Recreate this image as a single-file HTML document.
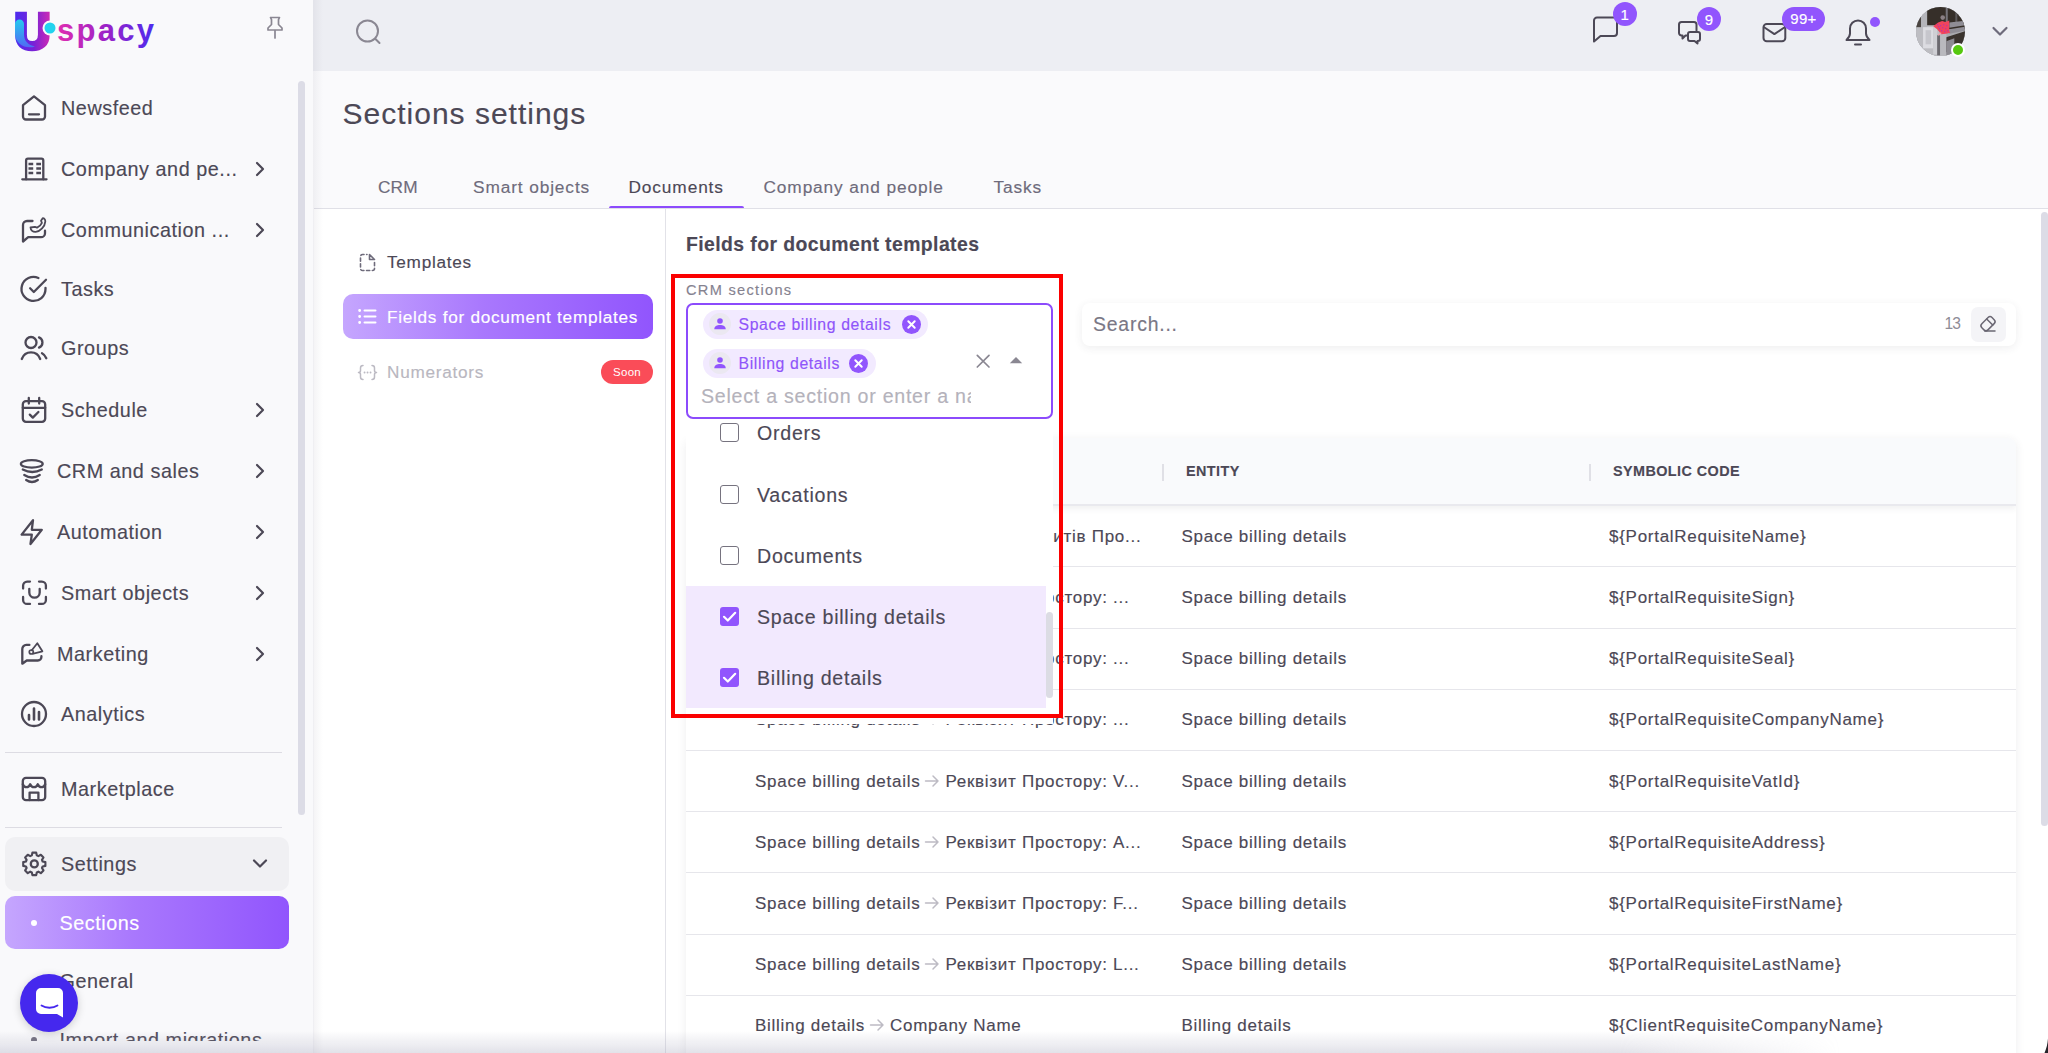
<!DOCTYPE html>
<html lang="en">
<head>
<meta charset="utf-8">
<title>Sections settings</title>
<style>
*{box-sizing:border-box;margin:0;padding:0}
html,body{width:2048px;height:1053px;overflow:hidden}
body{font-family:"Liberation Sans",sans-serif;-webkit-text-stroke:.15px;color:#4c4856;background:#fafafc;position:relative}
.abs{position:absolute}
svg{display:block;overflow:visible}
/* sidebar */
#sidebar{position:absolute;left:0;top:0;width:313px;height:1053px;background:#f9f9fb;z-index:5;overflow:hidden}
#sideshadow{position:absolute;left:313px;top:0;width:10px;height:1053px;background:linear-gradient(90deg,rgba(90,85,110,.07),rgba(90,85,110,0));z-index:6}
.nav{position:absolute;left:0;width:296px;height:40px}
.nav .ic{position:absolute;left:20px;top:6px;width:28px;height:28px}
.nav .tx{position:absolute;left:61px;top:0;line-height:40px;font-size:19.8px;letter-spacing:.55px;white-space:nowrap;color:#4c4856}
.nav .ch{position:absolute;left:253px;top:13px;width:14px;height:14px}
.ic svg{width:28px;height:28px;fill:none;stroke:#4c4856;stroke-width:2.3;stroke-linecap:round;stroke-linejoin:round}
.ch svg{width:14px;height:14px;fill:none;stroke:#4c4856;stroke-width:2.2;stroke-linecap:round;stroke-linejoin:round}
.hr{position:absolute;left:5px;width:277px;height:1px;background:#dddce3}
/* topbar */
#topbar{position:absolute;left:313px;top:0;width:1735px;height:70.600px;background:#edeef3}
.ticon svg{fill:none;stroke:#4c4856;stroke-width:2;stroke-linecap:round;stroke-linejoin:round}
.badge{position:absolute;background:#9155fd;color:#fff;border-radius:13px;height:25px;line-height:25px;font-size:15px;text-align:center;letter-spacing:.3px}
/* main */
#title{position:absolute;left:342.500px;top:93.500px;font-size:30px;line-height:40px;letter-spacing:1px;color:#4c4856;white-space:nowrap}
.tab{position:absolute;top:174.500px;font-size:17.3px;line-height:24px;letter-spacing:.88px;color:#6e6b7b;white-space:nowrap}
#panel{position:absolute;left:314px;top:209px;width:1734px;height:844px;background:#fff}
#tabline{position:absolute;left:314px;top:207.800px;width:1734px;height:1.400px;background:#e0e0e7}

/* subnav */
.sn{position:absolute;left:343px;width:310px;height:45px;border-radius:10px}
.sn .tx{position:absolute;left:44px;top:.7px;line-height:45px;font-size:17.2px;letter-spacing:.72px;white-space:nowrap}
.sn .si{position:absolute;left:14px;top:12px;width:21px;height:21px}
/* content */
#vdiv{position:absolute;left:665px;top:209px;width:1px;height:844px;background:#e2e2e8}
#h6{position:absolute;left:686px;top:230px;font-size:19.4px;line-height:28px;font-weight:700;letter-spacing:.42px;color:#4c4856;white-space:nowrap}
#search{position:absolute;left:1082px;top:303px;width:934px;height:43px;border-radius:8px;background:#fff;box-shadow:0 2px 9px rgba(58,53,65,.085)}
#table{position:absolute;left:686px;top:438px;width:1330px;height:640px;background:#fff;border-radius:8px 8px 0 0;box-shadow:0 2px 10px rgba(58,53,65,.09);overflow:hidden}
#thead{position:absolute;left:0;top:0;width:100%;height:68.300px;background:#f9fafc;border-bottom:2px solid #e9e9ee;box-shadow:0 3px 6px rgba(58,53,65,.07)}
.th{position:absolute;top:21px;line-height:24px;font-size:14.4px;font-weight:700;letter-spacing:.42px;color:#4c4856;white-space:nowrap}
.sep{position:absolute;top:26px;width:2px;height:17px;background:#e0e0e6}
.tr{position:absolute;left:0;width:100%;height:61.2px;border-bottom:1.400px solid #e6e6eb}
.td{position:absolute;top:.6px;line-height:60px;font-size:17px;letter-spacing:.72px;color:#4c4856;white-space:nowrap;overflow:hidden;text-overflow:ellipsis}
.td i{display:inline-block;vertical-align:-1px;margin:0 5px 0 4px}
.td i svg{fill:none;stroke:#bdbbc4;stroke-width:1.500;stroke-linecap:round;stroke-linejoin:round}

/* select / dropdown */
#lbl{position:absolute;left:686px;top:279.500px;font-size:14.600px;line-height:20px;letter-spacing:1.3px;color:#85828f;white-space:nowrap;z-index:3}
#dd{position:absolute;left:686px;top:416px;width:367px;height:308px;background:#fff;z-index:2}
#sel{position:absolute;left:686px;top:302.500px;width:367.300px;height:116.500px;border:2.200px solid #8c4bfc;border-radius:7px;background:#fff;z-index:3}
.chip{position:absolute;left:15px;height:29px;border-radius:15px;background:#f2eaff;white-space:nowrap}
.chip .av{position:absolute;left:6px;top:3.500px;width:22px;height:22px;border-radius:50%;background:#ebe8f1}
.chip .ct{position:absolute;left:35.500px;top:0;line-height:29px;font-size:15.800px;letter-spacing:.62px;color:#8f55fa}
.chip .cx{position:absolute;top:5px;width:19px;height:19px;border-radius:50%;background:#9155fd}
.opt{position:absolute;left:0;width:360px;height:61px}
.opt .cb{position:absolute;left:34px;top:21px;width:19px;height:19px;border:1.700px solid #76737f;border-radius:3px}
.opt .cb.on{border:none;background:#9155fd}
.opt .ot{position:absolute;left:71px;top:1px;line-height:61px;font-size:19.600px;letter-spacing:.75px;color:#4c4856;white-space:nowrap}
#red{position:absolute;left:671px;top:274px;width:392px;height:444px;border:4px solid #fb0000;z-index:4}

/* sidebar extras */
#settings{position:absolute;left:5px;top:836.500px;width:284px;height:54px;border-radius:10px;background:#f0f0f3}
#sections{position:absolute;left:5px;top:895.500px;width:284px;height:53.500px;border-radius:10px;background:linear-gradient(90deg,#c5a6fe 0%,#a978fd 45%,#9155fd 100%)}
.sub{position:absolute;left:59.500px;line-height:40px;font-size:19.800px;letter-spacing:.55px;white-space:nowrap;color:#4c4856}
.dot{position:absolute;left:31px;width:6px;height:6px;border-radius:50%;background:#6e6b7b}
#sscroll{position:absolute;left:297.500px;top:81px;width:7px;height:734px;border-radius:4px;background:#dcdce6}
#chat{position:absolute;left:20px;top:974px;width:58px;height:58px;border-radius:50%;background:#4528ee;box-shadow:0 2px 8px rgba(0,0,0,.18);z-index:8}
#sbot{position:absolute;left:0;top:1041px;width:313px;height:12px;background:#f9f9fb}
#botshade{position:absolute;left:0;top:1031px;width:1840px;height:22px;background:linear-gradient(180deg,rgba(170,170,190,0),rgba(170,170,190,.34));-webkit-mask-image:linear-gradient(90deg,#000 0,#000 88%,transparent 100%);mask-image:linear-gradient(90deg,#000 0,#000 88%,transparent 100%);z-index:20;pointer-events:none}
#mscroll{position:absolute;left:2040.500px;top:212px;width:7.500px;height:614px;border-radius:4px;background:#dcdce6;z-index:3}
</style>
</head>
<body>
<div id="topbar">
  <div class="abs ticon" style="left:40px;top:16px"><svg width="30" height="30" viewBox="0 0 30 30" style="stroke:#8a8792;stroke-width:2"><circle cx="14.500" cy="15" r="10.500"/><path d="M22.200 22.700l4.300 4.300"/></svg></div>

<div class="abs ticon" style="left:1279px;top:16px"><svg width="27" height="27" viewBox="0 0 27 27"><path d="M5 1.500h17a3 3 0 0 1 3 3v12.500a3 3 0 0 1-3 3H8.500L2 25.500V4.500a3 3 0 0 1 3-3z"/></svg></div>
<div class="badge" style="left:1299.700px;top:1.800px;width:24.400px;height:24.400px">1</div>
<div class="abs ticon" style="left:1364px;top:20px"><svg width="26" height="25" viewBox="0 0 26 25"><path d="M10 15.500H8.500L5.500 18.500V15.500H4.500a2.500 2.500 0 0 1-2.500-2.500V4.500A2.500 2.500 0 0 1 4.500 2h12.500a2.500 2.500 0 0 1 2.500 2.500V10.500"/><path d="M13 12h8a2 2 0 0 1 2 2v5a2 2 0 0 1-2 2h-.5v2.500l-3-2.500H13a2 2 0 0 1-2-2v-5a2 2 0 0 1 2-2z"/></svg></div>
<div class="badge" style="left:1383.800px;top:6.800px;width:24.400px;height:24.400px">9</div>
<div class="abs ticon" style="left:1449px;top:23px"><svg width="25" height="20" viewBox="0 0 25 20"><rect x="1.500" y="1" width="21.800" height="17.200" rx="3.300"/><path d="M2.500 4.500l9.900 6.600 9.900-6.600"/></svg></div>
<div class="badge" style="left:1469px;top:7px;width:43px;height:24px;line-height:24px">99+</div>
<div class="abs ticon" style="left:1532px;top:19px"><svg width="26" height="28" viewBox="0 0 26 28"><path d="M13 1.500c-4.500 0-8 3.500-8 8v5c0 2.500-1.500 4.500-3.500 6.500h23c-2-2-3.500-4-3.500-6.500v-5c0-4.500-3.500-8-8-8z"/><path d="M10 25.500h6"/></svg></div>
<div class="abs" style="left:1557px;top:16.500px;width:10px;height:10px;border-radius:50%;background:#9155fd"></div>
<div class="abs" style="left:1602.500px;top:6.800px;width:49.400px;height:49.400px;border-radius:50%;overflow:hidden;background:#9a9a9e"><svg width="49.400" height="49.400" viewBox="0 0 49 49"><rect width="49" height="49" fill="#a9a9ae"/><rect x="0" y="18" width="30" height="31" fill="#bdbdc2"/><path d="M11 0h38v22H30l-3-4H11z" fill="#362f29"/><rect x="0" y="8" width="5" height="12" fill="#4a4440"/><rect x="5" y="4" width="6" height="16" fill="#b5b5ba"/><rect x="29.500" y="0" width="2" height="16" fill="#77757b"/><rect x="39" y="0" width="2" height="16" fill="#5d5a5c"/><path d="M33 15.500l16-2v4.500l-16 2.500zM33 22l16-2.500v4l-16 3z" fill="#8f8d95"/><path d="M30 30l19-6v16l-8 2-11 3z" fill="#3a332e"/><rect x="40" y="40" width="9" height="9" fill="#6a686e"/><rect x="7" y="20" width="10" height="21" fill="#dcdce1"/><rect x="9.500" y="23" width="5.500" height="14" fill="#c6c6cc"/><rect x="17" y="19" width="4" height="28" fill="#cfcfd4"/><rect x="21" y="28" width="3" height="20" fill="#6b696f"/><rect x="24" y="27" width="6" height="22" fill="#b9b9be"/><path d="M30 34l8-3v16l-8 1z" fill="#8d8b92"/><circle cx="26.500" cy="10.500" r="2.300" fill="#8a8084"/><path d="M17 19l5-3.500 4-1.500 3 1 4-1.500v10l1 2-4 1-5 .5-4-5z" fill="#f0445c"/><path d="M21 17h1v1h-1zM24 18h1v1h-1zM27 17h1v1h-1zM23 21h1v1h-1zM26 20h1v1h-1zM29 21h1v1h-1zM25 23h1v1h-1zM28 24h1v1h-1zM30 18h1v1h-1zM22 19h1v1h-1zM31 23h1v1h-1z" fill="#a02bd0"/><path d="M22 28l3-2.500" stroke="#f59aa5" stroke-width="1.200"/></svg></div>
<div class="abs" style="left:1638px;top:42.500px;width:14px;height:14px;border-radius:50%;background:#56c80f;border:2.200px solid #fff"></div>
<div class="abs ticon" style="left:1679px;top:26px"><svg width="16" height="11" viewBox="0 0 16 11" style="stroke:#6e6b7b;stroke-width:2.200"><path d="M1.500 2l6.500 6.500L14.500 2"/></svg></div>
</div>
<div id="title">Sections settings</div>
<div class="tab" style="left:378px;letter-spacing:.1px">CRM</div>
<div class="tab" style="left:473px">Smart objects</div>
<div class="tab" style="left:628.500px;color:#4c4856">Documents</div>
<div class="tab" style="left:763.500px">Company and people</div>
<div class="tab" style="left:993.500px">Tasks</div>
<div id="tabline"></div>
<div class="abs" style="left:609px;top:205.600px;width:135px;height:2.700px;background:#8c4bfc;border-radius:2px 2px 0 0;z-index:1"></div>
<div id="panel"></div>

<div class="sn" style="top:239.500px"><div class="si"><svg viewBox="0 0 21 21" width="21" height="21" fill="none" stroke="#6e6b7b" stroke-width="1.600" stroke-linecap="round"><path d="M12.500 2.500l5 5h-5z" stroke-linejoin="round"/><path d="M17.500 10.500v6a2 2 0 0 1-2 2h-10a2 2 0 0 1-2-2v-12a2 2 0 0 1 2-2h4.500" stroke-dasharray="3.200 2.600"/></svg></div><div class="tx" style="color:#4c4856">Templates</div></div>
<div class="sn" style="top:294px;background:linear-gradient(90deg,#c5a6fe 0%,#a978fd 45%,#9155fd 100%)"><div class="si"><svg viewBox="0 0 21 21" width="21" height="21" fill="none" stroke="#fff" stroke-width="2" stroke-linecap="round"><path d="M7.500 4.500h11M7.500 10.500h11M7.500 16.500h11"/><path d="M2.600 4.500h.1M2.600 10.500h.1M2.600 16.500h.1" stroke-width="2.800"/></svg></div><div class="tx" style="color:#fff">Fields for document templates</div></div>
<div class="sn" style="top:349.500px"><div class="si"><svg viewBox="0 0 21 21" width="21" height="21" fill="none" stroke="#bcbac3" stroke-width="1.500" stroke-linecap="round" stroke-linejoin="round"><path d="M6 3.500c-2 0-2.500 1-2.500 2.500v2.500c0 1.200-.8 2-2 2 1.200 0 2 .8 2 2V15c0 1.500.5 2.500 2.500 2.500M15 3.500c2 0 2.500 1 2.500 2.500v2.500c0 1.200.8 2 2 2-1.200 0-2 .8-2 2V15c0 1.500-.5 2.500-2.500 2.500"/><path d="M7.500 10.500h.1M10.500 10.500h.1M13.500 10.500h.1" stroke-width="1.800"/></svg></div><div class="tx" style="color:#b9b7c0">Numerators</div>
<div class="abs" style="left:258px;top:10.500px;width:52px;height:24px;border-radius:12px;background:#fa4c58;color:#fff;font-size:11.500px;line-height:24px;text-align:center;letter-spacing:.3px;-webkit-text-stroke:0">Soon</div></div>
<div id="vdiv"></div>
<div id="h6">Fields for document templates</div>
<div id="search"><div class="abs" style="left:11px;top:0;line-height:43px;font-size:19.400px;letter-spacing:.8px;color:#7a7785">Search...</div>
<div class="abs" style="left:862.500px;top:0;line-height:42.500px;font-size:15.600px;color:#8f8c97;letter-spacing:-.8px;-webkit-text-stroke:0">13</div>
<div class="abs" style="left:889px;top:4.400px;width:35.300px;height:34.300px;border-radius:7px;background:#f4f4f7"><svg style="position:absolute;left:0;top:0" width="35" height="34" viewBox="0 0 35 34" fill="none" stroke="#6a6773" stroke-width="1.500" stroke-linejoin="round" stroke-linecap="round"><g transform="translate(17 16.700) rotate(-45)"><rect x="-7.200" y="-4.300" width="14.400" height="8.600" rx="2.800"/><path d="M2.400 -4.300V4.300"/></g><path d="M13.800 24.100H24"/></svg></div>
</div>
<div id="table">
<div id="thead"><div class="sep" style="left:475.500px"></div><div class="th" style="left:500px">ENTITY</div><div class="sep" style="left:902.500px"></div><div class="th" style="left:927px">SYMBOLIC CODE</div></div>
<div class="tr" style="top:68.3px"><div class="td" style="left:69px">Space billing details<i><svg viewBox="0 0 16 14" width="16" height="14"><path d="M1.500 7h12.500M9 2l5 5-5 5"/></svg></i>Назва реквізитів Про...</div><div class="td" style="left:495.500px">Space billing details</div><div class="td" style="left:923px">${PortalRequisiteName}</div></div>
<div class="tr" style="top:129.5px"><div class="td" style="left:69px">Space billing details<i><svg viewBox="0 0 16 14" width="16" height="14"><path d="M1.500 7h12.500M9 2l5 5-5 5"/></svg></i>Реквізит Простору: ...</div><div class="td" style="left:495.500px">Space billing details</div><div class="td" style="left:923px">${PortalRequisiteSign}</div></div>
<div class="tr" style="top:190.7px"><div class="td" style="left:69px">Space billing details<i><svg viewBox="0 0 16 14" width="16" height="14"><path d="M1.500 7h12.500M9 2l5 5-5 5"/></svg></i>Реквізит Простору: ...</div><div class="td" style="left:495.500px">Space billing details</div><div class="td" style="left:923px">${PortalRequisiteSeal}</div></div>
<div class="tr" style="top:251.9px"><div class="td" style="left:69px">Space billing details<i><svg viewBox="0 0 16 14" width="16" height="14"><path d="M1.500 7h12.500M9 2l5 5-5 5"/></svg></i>Реквізит Простору: ...</div><div class="td" style="left:495.500px">Space billing details</div><div class="td" style="left:923px">${PortalRequisiteCompanyName}</div></div>
<div class="tr" style="top:313.1px"><div class="td" style="left:69px">Space billing details<i><svg viewBox="0 0 16 14" width="16" height="14"><path d="M1.500 7h12.500M9 2l5 5-5 5"/></svg></i>Реквізит Простору: V...</div><div class="td" style="left:495.500px">Space billing details</div><div class="td" style="left:923px">${PortalRequisiteVatId}</div></div>
<div class="tr" style="top:374.3px"><div class="td" style="left:69px">Space billing details<i><svg viewBox="0 0 16 14" width="16" height="14"><path d="M1.500 7h12.500M9 2l5 5-5 5"/></svg></i>Реквізит Простору: A...</div><div class="td" style="left:495.500px">Space billing details</div><div class="td" style="left:923px">${PortalRequisiteAddress}</div></div>
<div class="tr" style="top:435.5px"><div class="td" style="left:69px">Space billing details<i><svg viewBox="0 0 16 14" width="16" height="14"><path d="M1.500 7h12.500M9 2l5 5-5 5"/></svg></i>Реквізит Простору: F...</div><div class="td" style="left:495.500px">Space billing details</div><div class="td" style="left:923px">${PortalRequisiteFirstName}</div></div>
<div class="tr" style="top:496.7px"><div class="td" style="left:69px">Space billing details<i><svg viewBox="0 0 16 14" width="16" height="14"><path d="M1.500 7h12.500M9 2l5 5-5 5"/></svg></i>Реквізит Простору: L...</div><div class="td" style="left:495.500px">Space billing details</div><div class="td" style="left:923px">${PortalRequisiteLastName}</div></div>
<div class="tr" style="top:557.9px"><div class="td" style="left:69px">Billing details<i><svg viewBox="0 0 16 14" width="16" height="14"><path d="M1.500 7h12.500M9 2l5 5-5 5"/></svg></i>Company Name</div><div class="td" style="left:495.500px">Billing details</div><div class="td" style="left:923px">${ClientRequisiteCompanyName}</div></div>
</div>

<div id="lbl">CRM sections</div>
<div id="dd">
<div class="opt" style="top:-14px"><div class="cb"></div><div class="ot">Orders</div></div>
<div class="opt" style="top:47.500px"><div class="cb"></div><div class="ot">Vacations</div></div>
<div class="opt" style="top:108.500px"><div class="cb"></div><div class="ot">Documents</div></div>
<div class="opt" style="top:170px;background:#f2e9fe"><div class="cb on"><svg viewBox="0 0 19 19" width="19" height="19"><path d="M4 9.800l3.800 3.700L15.200 5.800" fill="none" stroke="#fff" stroke-width="2.200" stroke-linecap="round" stroke-linejoin="round"/></svg></div><div class="ot">Space billing details</div></div>
<div class="opt" style="top:231px;height:60.500px;background:#f2e9fe"><div class="cb on"><svg viewBox="0 0 19 19" width="19" height="19"><path d="M4 9.800l3.800 3.700L15.200 5.800" fill="none" stroke="#fff" stroke-width="2.200" stroke-linecap="round" stroke-linejoin="round"/></svg></div><div class="ot">Billing details</div></div>
<div class="abs" style="left:360px;top:196px;width:7px;height:86px;border-radius:4px;background:#dcdce4"></div>
</div>
<div id="sel">
<div class="chip" style="top:5px;width:225px"><div class="av"><svg viewBox="0 0 22 22" width="22" height="22"><circle cx="11" cy="8" r="2.800" fill="#9155fd"/><path d="M5.300 16.200c0-2.900 2.600-4.100 5.700-4.100s5.700 1.200 5.700 4.100z" fill="#9155fd"/></svg></div><div class="ct">Space billing details</div><div class="cx" style="left:198.500px"><svg viewBox="0 0 19 19" width="19" height="19"><path d="M6.300 6.300l6.400 6.400M12.700 6.300l-6.400 6.400" stroke="#fff" stroke-width="2" stroke-linecap="round"/></svg></div></div>
<div class="chip" style="top:44px;width:173px"><div class="av"><svg viewBox="0 0 22 22" width="22" height="22"><circle cx="11" cy="8" r="2.800" fill="#9155fd"/><path d="M5.300 16.200c0-2.900 2.600-4.100 5.700-4.100s5.700 1.200 5.700 4.100z" fill="#9155fd"/></svg></div><div class="ct">Billing details</div><div class="cx" style="left:146px"><svg viewBox="0 0 19 19" width="19" height="19"><path d="M6.300 6.300l6.400 6.400M12.700 6.300l-6.400 6.400" stroke="#fff" stroke-width="2" stroke-linecap="round"/></svg></div></div>
<div class="abs" style="left:13px;top:77px;width:270px;overflow:hidden;line-height:28px;font-size:19.600px;letter-spacing:.75px;color:#b4b2bb;white-space:nowrap">Select a section or enter a name</div>
<svg class="abs" style="left:287px;top:48px" width="16" height="16" viewBox="0 0 16 16"><path d="M2.300 2.300l11.700 11.700M14 2.300L2.300 14" stroke="#8a8792" stroke-width="1.700" stroke-linecap="round"/></svg>
<svg class="abs" style="left:320.500px;top:51.600px" width="14" height="8" viewBox="0 0 14 8"><path d="M0.800 7.200L7 1l6.200 6.200z" fill="#8a8792"/></svg>
</div>
<div id="red"></div>
<div id="sidebar">

<div class="abs" style="left:14px;top:10px"><svg width="142" height="44" viewBox="0 0 142 44">
<defs><linearGradient id="lg1" x1="0" y1="0" x2="1" y2="0"><stop offset="0" stop-color="#4a2cf0"/><stop offset=".55" stop-color="#7a22d6"/><stop offset="1" stop-color="#d02ab4"/></linearGradient>
<linearGradient id="lg2" x1="0" y1="0" x2="1" y2="0"><stop offset="0" stop-color="#e02db0"/><stop offset=".5" stop-color="#9a22c8"/><stop offset="1" stop-color="#4b2cf0"/></linearGradient>
<linearGradient id="lg3" x1="0" y1="0" x2="0" y2="1"><stop offset="0" stop-color="#22d3ee"/><stop offset="1" stop-color="#4f6df5"/></linearGradient></defs>
<text x=".4" y="39" font-family="Liberation Sans,sans-serif" font-weight="700" font-size="50.500" fill="url(#lg1)" stroke="url(#lg1)" stroke-width="4.600" textLength="35.900" lengthAdjust="spacingAndGlyphs" style="-webkit-text-stroke:0">U</text>
<path d="M1 14a4.500 4.500 0 0 1 9 0v10c0 7 4 11 11 12.500-9 3-20-2-20-13z" fill="url(#lg3)" opacity=".95"/>
<circle cx="36" cy="18" r="7.500" fill="#f9f9fb"/><circle cx="36" cy="18" r="5.500" fill="#22d3ee"/>
<text x="43" y="31" font-family="Liberation Sans,sans-serif" font-weight="700" font-size="31" letter-spacing="2.300" fill="url(#lg2)">spacy</text>
</svg></div>
<svg class="abs" style="left:265px;top:16px" width="20" height="24" viewBox="0 0 20 24" fill="none" stroke="#8a8792" stroke-width="1.700" stroke-linejoin="round" stroke-linecap="round"><path d="M5.500 1.500h9l-1 2.200v4.800l3.500 3.500v2h-14v-2l3.500-3.500V3.700z"/><path d="M10 14.500v7.500"/></svg>
<div id="sscroll"></div>
<div class="hr" style="top:751.500px"></div>
<div class="hr" style="top:827px"></div>
<div id="settings"></div>
<div class="nav" style="top:843.500px"><div class="ic"><svg viewBox="0 0 28 28"><path d="M11.700 2.300h4.600l.7 3.300 1.900.9 3-1.700 3.200 3.300-1.800 2.900.8 2 3.300.700v4.600l-3.300.700-.8 1.900 1.800 2.900-3.200 3.300-3-1.800-1.900.9-.7 3.300h-4.600l-.7-3.300-1.900-.9-3 1.800-3.200-3.300 1.800-2.900-.8-1.900-3.300-.700v-4.600l3.300-.700.8-2-1.800-2.900 3.200-3.300 3 1.700 1.900-.9z" transform="translate(2.740 .770) scale(.826)" stroke-width="2.600"/><circle cx="14.300" cy="13.900" r="3.500"/></svg></div><div class="tx">Settings</div><div class="ch" style="left:253px;top:13px"><svg viewBox="0 0 14 14"><path d="M1 3.500l6 6 6-6"/></svg></div></div>
<div id="sections"><div class="dot" style="left:26px;top:24px;background:#fff"></div><div class="sub" style="left:54.500px;top:7px;color:#fff">Sections</div></div>
<div class="sub" style="top:961px">General</div>
<div class="dot" style="top:1037px"></div>
<div class="sub" style="top:1020px">Import and migrations</div>
<div id="sbot"></div>
<div class="nav" style="top:87.5px"><div class="ic"><svg viewBox="0 0 28 28"><path d="M3 11.2 14 2.4l11 8.8v11.3a3 3 0 0 1-3 3H6a3 3 0 0 1-3-3z"/><path d="M9 20.3h10"/></svg></div><div class="tx">Newsfeed</div></div>
<div class="nav" style="top:149px"><div class="ic"><svg viewBox="0 0 28 28"><path d="M6.100 24.300V5.400a1.800 1.800 0 0 1 1.800-1.800h13.600a1.800 1.800 0 0 1 1.800 1.800V24.300"/><path d="M2.300 24.300h24.200"/><path d="M8.500 9h4.700M16.300 9H21M8.500 13.500h4.700M16.300 13.500H21M8.500 18h4.700M16.300 18H21" stroke-width="2.400" stroke-linecap="butt"/></svg></div><div class="tx">Company and pe...</div><div class="ch"><svg viewBox="0 0 14 14"><path d="M4 1l6 6-6 6"/></svg></div></div>
<div class="nav" style="top:210px"><div class="ic"><svg viewBox="0 0 28 28"><path d="M12.5 5H7a4 4 0 0 0-4 4v16.5l5.2-4.3H21a4 4 0 0 0 4-4v-2.5"/><path d="M10.5 11.5c.2 3 2.3 4.6 5.2 4.4 4.6-.4 9.200-5.500 9.600-10.300.1-1.700-.9-3.400-2.600-3.400l-1.700 2.500.9 2.200c-1 2.300-2.500 3.800-4.800 4.800l-2.200-.9z" stroke-width="1.8"/></svg></div><div class="tx">Communication ...</div><div class="ch"><svg viewBox="0 0 14 14"><path d="M4 1l6 6-6 6"/></svg></div></div>
<div class="nav" style="top:269px"><div class="ic"><svg viewBox="0 0 28 28"><path d="M25.500 12.800v1.200A12 12 0 1 1 18.400 3"/><path d="M26 4.800 13.800 17l-3.700-3.700"/></svg></div><div class="tx">Tasks</div></div>
<div class="nav" style="top:328px"><div class="ic"><svg viewBox="0 0 28 28"><circle cx="11" cy="8.500" r="5.500"/><path d="M1.800 25c1.600-4.300 5-6.600 9.200-6.600s7.600 2.300 9.200 6.600"/><path d="M19 3.400a5.500 5.500 0 0 1 0 10.200"/><path d="M22 19.300c2 1 3.400 2.800 4.300 5"/></svg></div><div class="tx">Groups</div></div>
<div class="nav" style="top:389.5px"><div class="ic"><svg viewBox="0 0 28 28"><rect x="2.800" y="5.200" width="22.400" height="20.600" rx="3.200"/><path d="M2.800 11.800h22.400M8.800 2v5.500M19.200 2v5.500"/><path d="M9.800 18.600l3 3 5.600-5.600"/></svg></div><div class="tx">Schedule</div><div class="ch"><svg viewBox="0 0 14 14"><path d="M4 1l6 6-6 6"/></svg></div></div>
<div class="nav" style="top:450.5px"><div class="ic"><svg viewBox="0 0 28 28"><ellipse cx="11.800" cy="6.900" rx="10.900" ry="3.700"/><path d="M2.800 12.500Q12.300 17.500 21.800 12.500M4.300 18Q12 23 19.700 18M6.200 23Q12 27 17.800 23"/></svg></div><div class="tx" style="left:57px">CRM and sales</div><div class="ch"><svg viewBox="0 0 14 14"><path d="M4 1l6 6-6 6"/></svg></div></div>
<div class="nav" style="top:511.5px"><div class="ic"><svg viewBox="0 0 28 28"><path d="M13 2.200 1.600 16.600H11.800L10.500 26 21.800 11.800H11.800z"/></svg></div><div class="tx" style="left:57px">Automation</div><div class="ch"><svg viewBox="0 0 14 14"><path d="M4 1l6 6-6 6"/></svg></div></div>
<div class="nav" style="top:573px"><div class="ic"><svg viewBox="0 0 28 28"><path d="M3.100 9.500V6.600a4 4 0 0 1 4-4H10M19 2.600h2.900a4 4 0 0 1 4 4V9.500M25.900 18v2.900a4 4 0 0 1-4 4H19M10 24.900H7.100a4 4 0 0 1-4-4V18"/><path d="M9.300 9.800v3.700a5.200 5.200 0 0 0 10.400 0V9.800"/></svg></div><div class="tx">Smart objects</div><div class="ch"><svg viewBox="0 0 14 14"><path d="M4 1l6 6-6 6"/></svg></div></div>
<div class="nav" style="top:634px"><div class="ic"><svg viewBox="0 0 28 28"><path d="M9.400 4.900H6.300a4 4 0 0 0-4 4V23.700l4.400-3.200h11.200a3.500 3.500 0 0 0 3.500-3.500v-.8"/><path d="M11.800 10.200 17.300 3.200l5.100 8.100-9 2.400" stroke-width="1.800"/><circle cx="11.300" cy="12" r="2" stroke-width="1.700"/></svg></div><div class="tx" style="left:57px">Marketing</div><div class="ch"><svg viewBox="0 0 14 14"><path d="M4 1l6 6-6 6"/></svg></div></div>
<div class="nav" style="top:693.5px"><div class="ic"><svg viewBox="0 0 28 28"><circle cx="14" cy="14" r="12"/><path d="M9 19.500V15M14 19.500V8.500M19 19.500V12" stroke-width="2.600"/></svg></div><div class="tx">Analytics</div></div>
<div class="nav" style="top:769px"><div class="ic"><svg viewBox="0 0 28 28"><rect x="2.800" y="2.800" width="22.400" height="22.400" rx="3.200"/><path d="M2.800 9.200c1.600 4 5.800 4 7.400 0 1.600 4 6 4 7.600 0 1.600 4 5.800 4 7.400 0"/><path d="M9.600 25v-7.400h8.800V25"/></svg></div><div class="tx">Marketplace</div></div>
</div>
<div id="sideshadow"></div>
<div id="chat"><svg class="abs" style="left:16px;top:14px" width="27" height="30" viewBox="0 0 27 30"><path d="M5 0h17a5 5 0 0 1 5 5v24.500l-6-3.500H5a5 5 0 0 1-5-5V5a5 5 0 0 1 5-5z" fill="#fff"/><path d="M5.500 17.500c4.500 3 11.500 3 16 0" fill="none" stroke="#4528ee" stroke-width="1.800" stroke-linecap="round"/></svg></div>
<div id="botshade"></div>
<div id="mscroll"></div>
<svg class="abs" style="left:2043px;top:1038px;z-index:21" width="5" height="15" viewBox="0 0 5 15"><path d="M5 0.500C4.500 6 3.500 10.500 1.500 15H5z" fill="#26242a"/></svg>

</body>
</html>
